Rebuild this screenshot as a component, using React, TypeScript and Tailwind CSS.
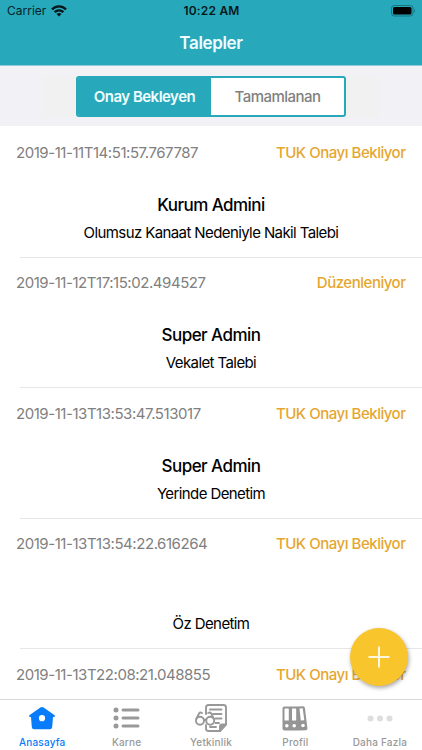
import type { ReactNode } from 'react';

type Talep = {
  tarih: string;
  durum: string;
  kisi?: string;
  konu: string;
};

const talepler: Talep[] = [
  { tarih: '2019-11-11T14:51:57.767787', durum: 'TUK Onayı Bekliyor', kisi: 'Kurum Admini', konu: 'Olumsuz Kanaat Nedeniyle Nakil Talebi' },
  { tarih: '2019-11-12T17:15:02.494527', durum: 'Düzenleniyor', kisi: 'Super Admin', konu: 'Vekalet Talebi' },
  { tarih: '2019-11-13T13:53:47.513017', durum: 'TUK Onayı Bekliyor', kisi: 'Super Admin', konu: 'Yerinde Denetim' },
  { tarih: '2019-11-13T13:54:22.616264', durum: 'TUK Onayı Bekliyor', konu: 'Öz Denetim' },
  { tarih: '2019-11-13T22:08:21.048855', durum: 'TUK Onayı Bekliyor', konu: '' },
];

const StatusBar = () => (
  <div className="grid h-[22px] grid-cols-3 items-center pl-[7px] pr-[6px] text-[12px] text-[#07242a]">
    <div className="flex items-center gap-[5px]">
      <span>Carrier</span>
      <svg width="16" height="12" viewBox="0 0 16 12" fill="none" stroke="#07181b" strokeWidth="2.4">
        <path d="M1 4.4C5 .3 11 .3 15 4.4" />
        <path d="M3.600 7.200c2.500-2.500 6.300-2.500 8.800 0" />
        <path d="M8 11.600 5.500 9c1.400-1.200 3.600-1.200 5 0z" fill="#07181b" stroke="none" />
      </svg>
    </div>
    <span className="text-center font-semibold tracking-[0.2px] text-[#07181b]">10:22 AM</span>
    <svg className="justify-self-end" width="25" height="12" viewBox="0 0 25 12">
      <rect x="0.5" y="0.5" width="21.5" height="10.5" rx="2.8" fill="none" stroke="#157482" />
      <rect x="2" y="2" width="18.5" height="7.5" rx="1.5" fill="#000" />
      <path d="M23.3 4v3.6c1.2-.5 1.2-3 0-3.6z" fill="#157482" />
    </svg>
  </div>
);

const TalepRow = ({ talep }: { talep: Talep }) => (
  <li className="h-[130.6px] shrink-0">
    <div className="flex items-center justify-between pl-4 pr-[16.5px] pt-[15px] text-[15px] leading-[22px]">
      <span className="tracking-[-0.45px] text-[#808080]">{talep.tarih}</span>
      <span className="font-medium tracking-[-0.48px] text-[#e5a62f]">{talep.durum}</span>
    </div>
    <div className="mt-[28px] h-[26px] text-center text-[17px] font-medium leading-[26px] tracking-[-0.55px] text-black">{talep.kisi}</div>
    <div className="mt-[5px] h-[20px] text-center text-[15px] leading-[20px] tracking-[-0.6px] text-black">{talep.konu}</div>
    <div className="ml-[20px] mt-[14px] h-px bg-[#e7e7e9]" />
  </li>
);

const Tab = ({ label, active, children }: { label: string; active?: boolean; children: ReactNode }) => (
  <div className={`flex flex-1 flex-col items-center ${active ? 'text-[#087cf9]' : 'text-[#999]'}`}>
    <div className="flex h-[36px] items-center">{children}</div>
    <span className="whitespace-nowrap text-[10px] font-medium leading-[12px] tracking-[0.2px]">{label}</span>
  </div>
);

const HomeIcon = () => (
  <svg width="28" height="24" viewBox="0 0 28 24" fill="currentColor">
    <path
      fillRule="evenodd"
      d="M12.400 1.500q1.600-1 3.200 0l10.700 7.400q1.800 1.600-.5 2.200H25l-.8 10q-.2 2.200-2.300 2.200H6.100q-2.100 0-2.300-2.200L3 11.100H2.200q-2.300-.6-.5-2.200zM14 9.100a3.100 3.100 0 1 0 0 6.200a3.100 3.100 0 1 0 0-6.200z"
    />
  </svg>
);

const ListIcon = () => (
  <svg width="27" height="22" viewBox="0 0 27 22" fill="currentColor">
    <circle cx="3" cy="3" r="2.5" />
    <circle cx="3" cy="11" r="2.5" />
    <circle cx="3" cy="19" r="2.5" />
    <rect x="8.5" y="1.5" width="18" height="3" rx="1.5" />
    <rect x="8.5" y="9.5" width="18" height="3" rx="1.5" />
    <rect x="8.5" y="17.5" width="18" height="3" rx="1.5" />
  </svg>
);

const ReadingIcon = () => (
  <svg width="32" height="28" viewBox="0 0 32 28" fill="none" stroke="currentColor" strokeWidth="1.9" strokeLinecap="round">
    <path d="M11 10V3.500Q11 1 13.500 1H28.500Q31 1 31 3.500V20.500L25 27H13.500Q11 27 11 24.500V21" />
    <path d="M31 20.500H27Q25 20.500 25 22.500V27z" fill="currentColor" />
    <path d="M15 5.500h11.500M18 10h8.500M20.500 14.500h6M20.500 19h3.500M15 23h6" />
    <circle cx="5" cy="16.800" r="4" />
    <circle cx="15.200" cy="16.800" r="4" />
    <path d="M9 16q1.100-1 2.200 0M1.300 15 4 9.500Q5 8 7 9M18.900 15l-2.700-5.500Q15.200 8 13.200 9" />
  </svg>
);

const BindersIcon = () => (
  <svg width="26" height="25" viewBox="0 0 26 25">
    <path d="M2.500.5H16l5-.2q1.600 0 1.900 1.500l2.500 20.500q.2 1.800-1.500 2L18 24.500H2.500Q.5 24.500.5 22.500v-20Q.5.500 2.500.500z" fill="#959595" />
    <g fill="#fff">
      <rect x="2.500" y="2.500" width="4.300" height="12" rx="0.5" />
      <rect x="10" y="2.500" width="4.200" height="12" rx="0.5" />
      <path d="m17.500 2.500 3.200-.3 1.600 12-3.500.4z" />
      <circle cx="4.800" cy="19.700" r="1.800" />
      <circle cx="12.200" cy="19.700" r="1.800" />
      <circle cx="21" cy="19.500" r="1.800" />
    </g>
  </svg>
);

const MoreIcon = () => (
  <svg width="26" height="7" viewBox="0 0 26 7" fill="#dedede">
    <circle cx="3.500" cy="3.500" r="3" />
    <circle cx="13" cy="3.500" r="3" />
    <circle cx="22.500" cy="3.500" r="3" />
  </svg>
);

export default function App() {
  return (
    <div className="relative flex h-[750px] w-[422px] flex-col overflow-hidden bg-white font-['Inter','Liberation_Sans',sans-serif]">
      <header className="h-[66px] shrink-0 border-b border-[#8fcbd8] bg-[#27a8bb]">
        <StatusBar />
        <h1 className="text-center text-[17px] font-semibold leading-[43px] tracking-[-0.35px] text-[#eefcfd]">Talepler</h1>
      </header>

      <div className="flex h-[60px] shrink-0 justify-center bg-[#f1f1f6]">
        <div className="flex h-full w-[338px] justify-center pt-[9.5px]">
          <div className="flex h-[42px] w-full justify-center bg-[#f1f1f2]">
            <div className="flex h-[41px] w-[270px] overflow-hidden rounded-[3px] border-2 border-[#27a8bb] bg-white text-[15px] leading-[37px] tracking-[-0.52px]">
              <div className="w-[133px] bg-[#27a8bb] text-center font-semibold text-[#f0feff]">Onay Bekleyen</div>
              <div className="flex-1 text-center font-medium text-[#808080]">Tamamlanan</div>
            </div>
          </div>
        </div>
      </div>

      <ul className="flex min-h-0 flex-1 flex-col overflow-hidden pt-[0.6px]">
        {talepler.map((talep) => (
          <TalepRow key={talep.tarih} talep={talep} />
        ))}
      </ul>

      <button
        aria-label="Yeni talep"
        className="absolute left-[350px] top-[628px] flex h-[58px] w-[58px] items-center justify-center rounded-full bg-[#f8c52c] shadow-[1px_2px_4px_rgba(0,0,0,0.35)]"
      >
        <svg width="22" height="22" viewBox="0 0 22 22" stroke="#fff8e0" strokeWidth="2">
          <path d="M11 .5v21M.5 11h21" />
        </svg>
      </button>

      <nav className="flex h-[51px] shrink-0 border-t border-[#d9d9d9] bg-white">
        <Tab label="Anasayfa" active>
          <HomeIcon />
        </Tab>
        <Tab label="Karne">
          <ListIcon />
        </Tab>
        <Tab label="Yetkinlik">
          <ReadingIcon />
        </Tab>
        <Tab label="Profil">
          <BindersIcon />
        </Tab>
        <Tab label="Daha Fazla">
          <MoreIcon />
        </Tab>
      </nav>
    </div>
  );
}
